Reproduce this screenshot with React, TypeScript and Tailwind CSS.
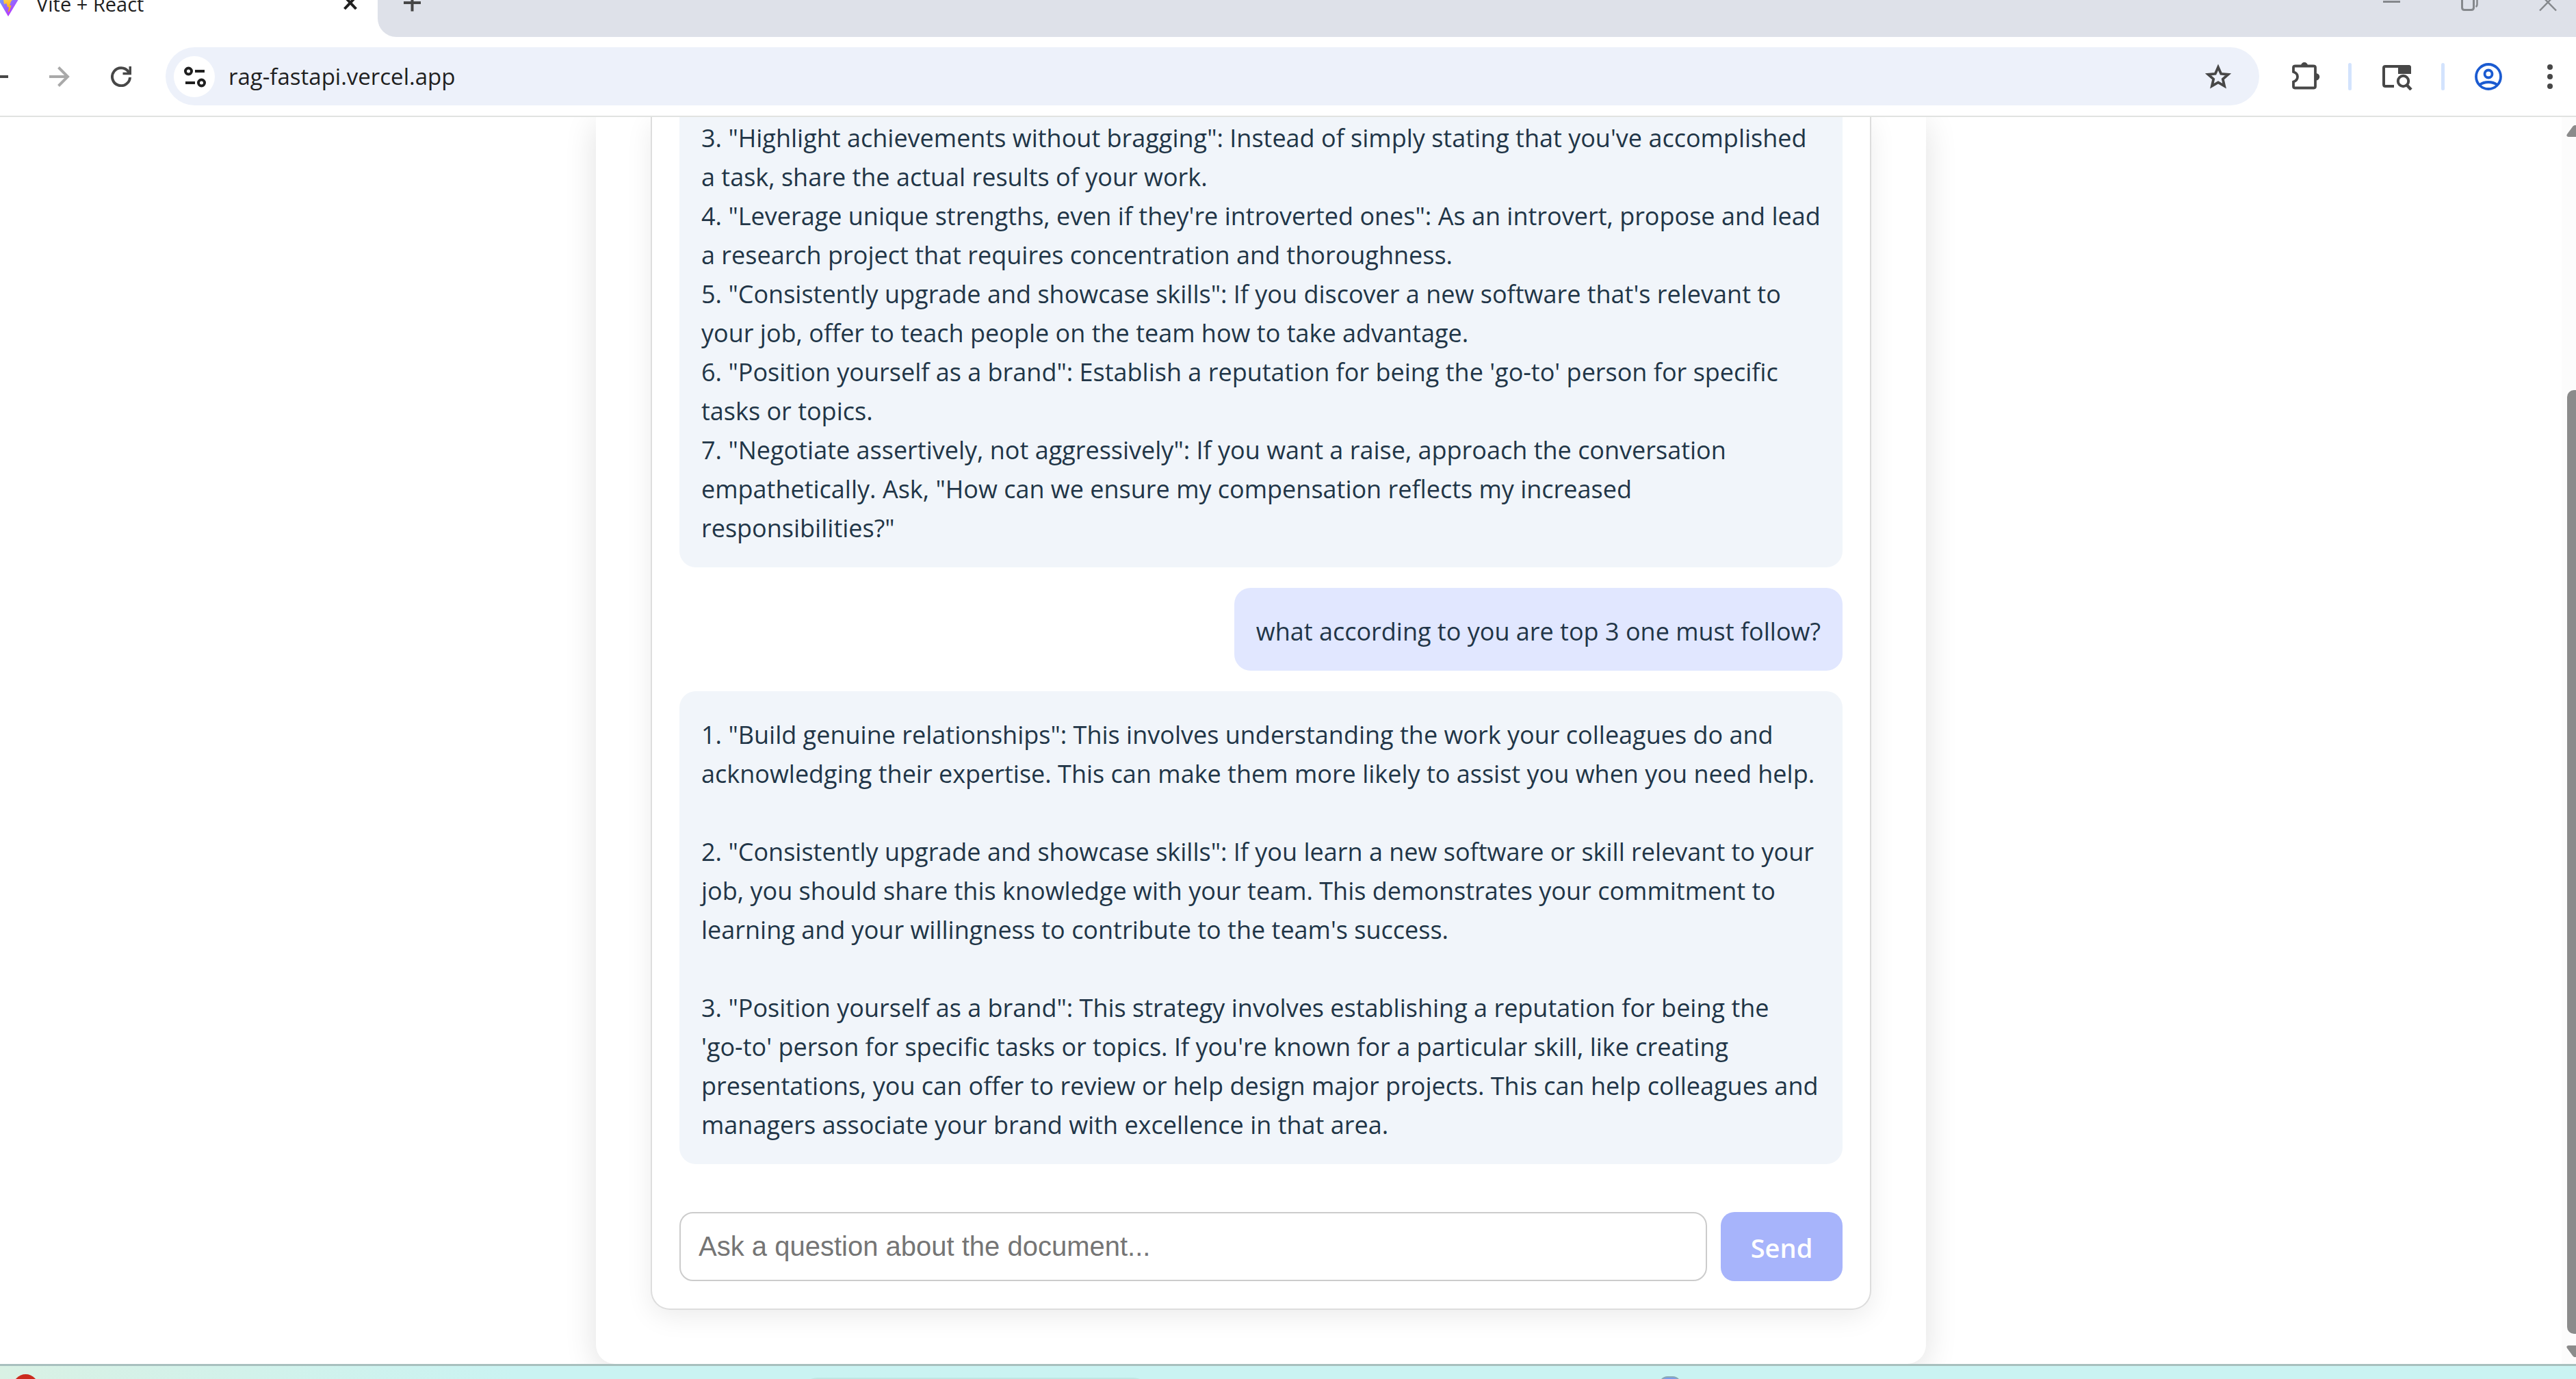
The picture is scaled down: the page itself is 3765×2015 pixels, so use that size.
import type { ReactNode } from 'react';

const firstReply = `3. "Highlight achievements without bragging": Instead of simply stating that you've accomplished
a task, share the actual results of your work.
4. "Leverage unique strengths, even if they're introverted ones": As an introvert, propose and lead
a research project that requires concentration and thoroughness.
5. "Consistently upgrade and showcase skills": If you discover a new software that's relevant to
your job, offer to teach people on the team how to take advantage.
6. "Position yourself as a brand": Establish a reputation for being the 'go-to' person for specific
tasks or topics.
7. "Negotiate assertively, not aggressively": If you want a raise, approach the conversation
empathetically. Ask, "How can we ensure my compensation reflects my increased
responsibilities?"`;

const secondReply = `1. "Build genuine relationships": This involves understanding the work your colleagues do and
acknowledging their expertise. This can make them more likely to assist you when you need help.

2. "Consistently upgrade and showcase skills": If you learn a new software or skill relevant to your
job, you should share this knowledge with your team. This demonstrates your commitment to
learning and your willingness to contribute to the team's success.

3. "Position yourself as a brand": This strategy involves establishing a reputation for being the
'go-to' person for specific tasks or topics. If you're known for a particular skill, like creating
presentations, you can offer to review or help design major projects. This can help colleagues and
managers associate your brand with excellence in that area.`;

function IconButton({ label, className, children }: { label: string; className: string; children: ReactNode }) {
  return (
    <button type="button" aria-label={label} className={`block shrink-0 ${className}`}>
      {children}
    </button>
  );
}

function TabStrip() {
  return (
    <div className="flex h-[54px] items-stretch overflow-hidden bg-white">
      <div className="flex w-[552px] shrink-0 items-start">
        <svg className="h-6 w-[27px] shrink-0" viewBox="0 0 27 24">
          <defs>
            <linearGradient id="shield" x1="-8" y1="-12" x2="16" y2="22" gradientUnits="userSpaceOnUse">
              <stop offset="0" stopColor="#41d1ff" />
              <stop offset="1" stopColor="#bd34fe" />
            </linearGradient>
            <linearGradient id="bolt" x1="8" y1="-14" x2="13" y2="16" gradientUnits="userSpaceOnUse">
              <stop offset="0" stopColor="#ffea83" />
              <stop offset="1" stopColor="#ffa800" />
            </linearGradient>
          </defs>
          <path d="M-2 0 L12 24 L26.500 0 Z" fill="url(#shield)" />
          <path d="M5 0 L6 6 L9.500 5 L11 10.500 L13 10 L12 18 L13.500 16.500 L16.500 8 L14 8 L16 2 L18 0 Z" fill="url(#bolt)" />
        </svg>
        <span className="-mt-[14px] ml-[26px] flex-1 text-[29px] leading-10 text-[#1f1f1f]">Vite + React</span>
        <IconButton label="Close tab" className="mr-[30px] text-[#1f1f1f]">
          <svg className="h-[14px] w-5" viewBox="0 0 20 14">
            <path d="M1.500 -5 L18.500 13 M18.500 -5 L1.500 13" stroke="currentColor" strokeWidth="4" />
          </svg>
        </IconButton>
      </div>
      <div className="flex flex-1 items-start rounded-bl-[27px] bg-[#dee1e9]">
        <IconButton label="New tab" className="ml-[38px] text-[#474747]">
          <svg className="h-[17px] w-[25px]" viewBox="0 0 25 17">
            <path d="M0 4 H25 M12.500 -8 V16.500" stroke="currentColor" strokeWidth="4" />
          </svg>
        </IconButton>
        <div className="ml-auto mr-7 flex gap-[88px] text-[#85888c]">
          <IconButton label="Minimize" className="">
            <svg className="h-[17px] w-[26px]" viewBox="0 0 26 17">
              <path d="M0 2.500 H25" stroke="currentColor" strokeWidth="3" />
            </svg>
          </IconButton>
          <IconButton label="Restore" className="">
            <svg className="h-[17px] w-[26px]" viewBox="0 0 26 17" fill="none" stroke="currentColor">
              <path d="M1.500 -6 V11 Q1.500 14.500 5 14.500 H15 Q18.500 14.500 18.500 11 V-6" strokeWidth="3" />
              <path d="M23.500 -6 V6 Q23.500 9 21.500 10" strokeWidth="2.500" />
            </svg>
          </IconButton>
          <IconButton label="Close window" className="">
            <svg className="h-[17px] w-[26px]" viewBox="0 0 26 17">
              <path d="M1 15.500 L25 -9 M25 15.500 L1 -9" stroke="currentColor" strokeWidth="2.500" />
            </svg>
          </IconButton>
        </div>
      </div>
    </div>
  );
}

function Toolbar() {
  return (
    <div className="flex h-[117px] items-center border-b-2 border-[#e1e3e1] bg-white pr-[33px] text-[#474747]">
      <IconButton label="Back" className="">
        <svg className="h-[30px] w-3" viewBox="0 0 12 30">
          <path d="M0 15 H12" stroke="currentColor" strokeWidth="4" />
        </svg>
      </IconButton>
      <IconButton label="Forward" className="ml-[60px] text-[#a9a9a9]">
        <svg className="size-[30px]" viewBox="0 0 30 30" fill="none" stroke="currentColor" strokeWidth="4">
          <path d="M0 15 H27 M13.500 1.500 L27 15 L13.500 28.500" />
        </svg>
      </IconButton>
      <IconButton label="Reload" className="ml-[60px]">
        <svg className="size-[30px]" viewBox="0 0 30 30" fill="none" stroke="currentColor" strokeWidth="4">
          <path d="M28 16 A13 13 0 1 1 25.500 7.500 L27.500 10" />
          <path d="M28.250 0 V10.500 H17.500" strokeWidth="3.500" />
        </svg>
      </IconButton>
      <div className="ml-[50px] flex h-[85px] min-w-0 flex-1 items-center rounded-full bg-[#edf1fa] pl-3 pr-10">
        <IconButton label="View site information" className="rounded-full bg-white text-[#1f1f1f]">
          <svg className="size-[60px]" viewBox="0 0 60 60" fill="none" stroke="currentColor" strokeWidth="4">
            <circle cx="21.500" cy="22" r="4.500" />
            <path d="M31 22 H45 M17 39 H31" />
            <circle cx="40.500" cy="39" r="4.500" />
          </svg>
        </IconButton>
        <input
          type="text"
          aria-label="Address"
          defaultValue="rag-fastapi.vercel.app"
          className="ml-5 min-w-0 flex-1 bg-transparent text-[33px] leading-[48px] text-[#1f1f1f] outline-none"
        />
        <IconButton label="Bookmark this tab" className="">
          <svg className="h-[38px] w-10" viewBox="0 0 40 38" fill="none" stroke="currentColor" strokeWidth="3.800">
            <path d="M20 5.300 L24.200 14.800 L34.600 15.800 L26.800 22.600 L29.100 32.700 L20 27.400 L10.900 32.700 L13.200 22.600 L5.400 15.800 L15.800 14.800 Z" />
          </svg>
        </IconButton>
      </div>
      <IconButton label="Extensions" className="ml-[46px]">
        <svg className="size-11" viewBox="0 0 44 44">
          <path
            d="M7 6.500 H33 Q36 6.500 36 8.500 V36 Q36 38.500 34 38.500 H6 Q4 38.500 4 36 V29.500 Q10 27.500 10 22 Q10 17 4 15 V8.500 Q4 6.500 7 6.500 Z"
            fill="none"
            stroke="currentColor"
            strokeWidth="3.800"
          />
          <path d="M15 6 A5 5 0 0 1 25 6 Z M37 17 A5 5 0 0 1 37 27.500 Z" fill="currentColor" />
        </svg>
      </IconButton>
      <div className="ml-10 h-10 w-[5px] shrink-0 rounded-full bg-[#d3e3fd]" />
      <IconButton label="Search this page" className="ml-[45px]">
        <svg className="h-10 w-11" viewBox="0 0 44 40" fill="none" stroke="currentColor" strokeWidth="4">
          <path d="M17 34 H4.500 Q2 34 2 31.500 V7 Q2 5 4.500 5 H38 Q40 5 40 7 V15" />
          <path d="M23 3 H38 Q42 3 42 7 V16 H23 Z" fill="currentColor" stroke="none" />
          <circle cx="30.500" cy="26.500" r="7.700" />
          <path d="M35.500 32 L42 39" strokeWidth="4.500" />
        </svg>
      </IconButton>
      <div className="ml-[42px] h-10 w-[5px] shrink-0 rounded-full bg-[#d3e3fd]" />
      <IconButton label="Profile" className="ml-11 text-[#1b5bd1]">
        <svg className="size-10" viewBox="0 0 40 40" fill="none" stroke="currentColor" strokeWidth="3.800">
          <circle cx="20" cy="20" r="18" />
          <circle cx="20" cy="16" r="5.500" />
          <path d="M7 32 Q12.500 28 20 28 Q27.500 28 33 32" />
        </svg>
      </IconButton>
      <IconButton label="Browser menu" className="ml-[65px]">
        <svg className="h-10 w-[10px]" viewBox="0 0 10 40" fill="currentColor">
          <circle cx="5" cy="6" r="4" />
          <circle cx="5" cy="20" r="4" />
          <circle cx="5" cy="34" r="4" />
        </svg>
      </IconButton>
    </div>
  );
}

function Chat() {
  return (
    <main className="flex min-w-0 flex-1 items-start justify-center overflow-hidden bg-white pr-[58px]">
      <div className="w-full max-w-[1944px] rounded-b-[28px] bg-white px-20 pb-[79px] shadow-[0_10px_48px_rgba(0,0,0,0.12)]">
        <section className="rounded-b-[28px] border-2 border-t-0 border-[#dddddd] bg-white px-10 pb-10 shadow-[0_10px_38px_rgba(0,0,0,0.08)]">
          <div className="flex flex-col gap-[30px] text-[36px] leading-[57px] text-[#213547]">
            <p className="whitespace-pre rounded-b-[24px] bg-[#f1f5fa] px-8 pb-[29px] pt-[2px]">{firstReply}</p>
            <p className="self-end whitespace-pre rounded-[24px] bg-[#e1e7ff] px-8 pb-[29px] pt-[35px]">
              what according to you are top 3 one must follow?
            </p>
            <p className="whitespace-pre rounded-[24px] bg-[#f1f5fa] px-8 pb-[29px] pt-[35px]">{secondReply}</p>
          </div>
          <form className="mt-[70px] flex gap-5" onSubmit={(e) => e.preventDefault()}>
            <input
              type="text"
              aria-label="Ask a question about the document"
              placeholder="Ask a question about the document..."
              className="h-[101px] min-w-0 flex-1 rounded-[20px] border-2 border-[#cccccc] bg-white px-[26px] font-['Liberation_Sans',sans-serif] text-[40px] placeholder:text-[#757575]"
            />
            <button
              type="submit"
              className="h-[101px] w-[178px] shrink-0 rounded-[20px] bg-[#a7b4fb] pt-1 text-[38px] font-semibold text-white"
            >
              Send
            </button>
          </form>
        </section>
      </div>
    </main>
  );
}

function Scrollbar() {
  return (
    <div className="flex w-[21px] shrink-0 flex-col overflow-hidden bg-[#fcfcfc] pb-[10px] pt-3 text-[#8b8b8b]">
      <svg className="h-[17px] w-[21px] shrink-0" viewBox="0 0 21 17">
        <path d="M16.500 1.500 Q18 0 19 0 H21 V17 H10 Q6 16.500 8 13 Z" fill="currentColor" />
      </svg>
      <div className="ml-2 mt-[370px] flex-1 rounded-l-[10px] bg-[#8b8b8b]" />
      <svg className="mt-[17px] h-[17px] w-[21px] shrink-0" viewBox="0 0 21 17">
        <path d="M16.500 15.500 Q18 17 19 17 H21 V0 H10 Q6 0.500 8 4 Z" fill="currentColor" />
      </svg>
    </div>
  );
}

function Taskbar() {
  return (
    <footer className="flex h-[22px] shrink-0 items-start overflow-hidden border-t-[3px] border-[#a8c0be] bg-linear-to-r from-[#d9f1e4] via-[#caf3f2] via-20% to-[#caf3f2]">
      <div className="ml-[19px] mt-3 size-[37px] shrink-0 rounded-full bg-[#cb2a1d]" />
      <div className="ml-[1118px] mt-[17px] h-20 w-[503px] shrink-0 rounded-[20px] bg-[#bfe6e3]" />
      <div className="ml-[748px] mt-[15px] size-8 shrink-0 rounded-[12px] border-2 border-[#8aa9b5] bg-[#7b9cec]" />
    </footer>
  );
}

export default function App() {
  return (
    <div className="flex h-screen flex-col overflow-hidden bg-white font-['Open_Sans',sans-serif]">
      <header className="shrink-0">
        <TabStrip />
        <Toolbar />
      </header>
      <div className="flex min-h-0 flex-1">
        <Chat />
        <Scrollbar />
      </div>
      <Taskbar />
    </div>
  );
}
